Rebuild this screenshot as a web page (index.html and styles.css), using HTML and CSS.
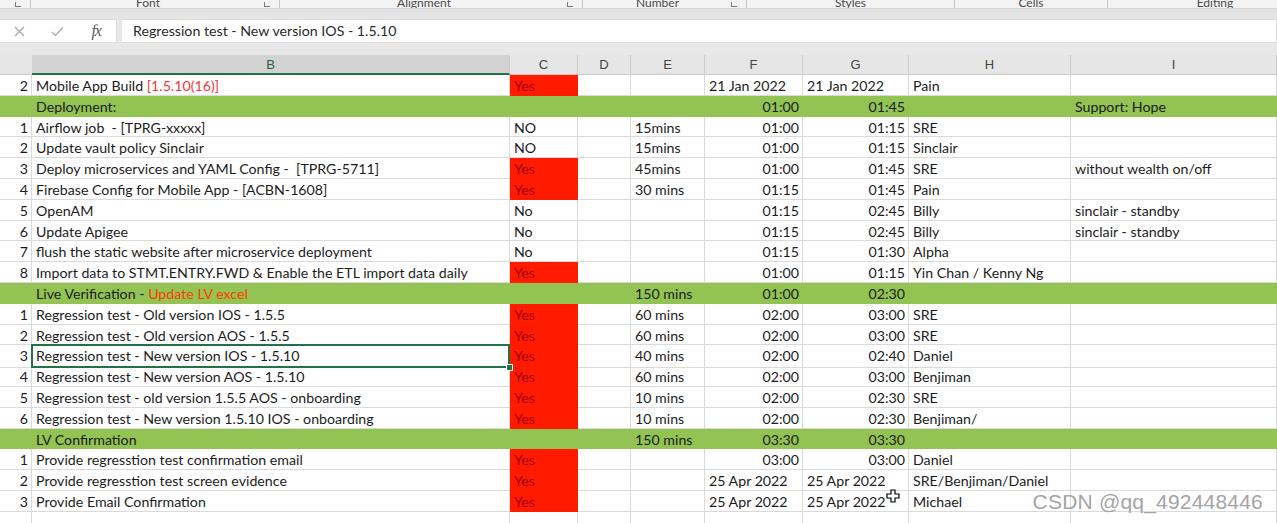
FILE: index.html
```html
<!DOCTYPE html>
<html>
<head>
    <title>Release Runbook - Sheet</title>
    <link rel="stylesheet" href="styles.css">
</head>
<body>
<div class="app">
    <div class="ribbon">
        <div class="grp g-clip"><span class="launch"></span></div>
        <div class="grp g-font"><span class="lbl">Font</span><span class="launch"></span></div>
        <div class="grp g-align"><span class="lbl">Alignment</span><span class="launch"></span></div>
        <div class="grp g-num"><span class="lbl">Number</span><span class="launch"></span></div>
        <div class="grp g-styles"><span class="lbl">Styles</span></div>
        <div class="grp g-cells"><span class="lbl">Cells</span></div>
        <div class="grp g-edit"><span class="lbl">Editing</span></div>
    </div>

    <div class="fbar">
        <div class="fx-box">
            <span class="ico ico-x">
                <svg width="11" height="11" viewBox="0 0 11 11"><path d="M1 1 L10 10 M10 1 L1 10" stroke="#a8a8a8" stroke-width="1.2" fill="none"/></svg>
            </span>
            <span class="ico ico-ok">
                <svg width="13" height="11" viewBox="0 0 13 11"><path d="M1 6 L4.5 9.5 L12 1.5" stroke="#a8a8a8" stroke-width="1.2" fill="none"/></svg>
            </span>
            <span class="ico ico-fx">fx</span>
        </div>
        <div class="formula">Regression test - New version IOS - 1.5.10</div>
    </div>

    <div class="sheet">
        <div class="row head">
            <div class="c"></div><div class="c sel">B</div><div class="c">C</div><div class="c">D</div><div class="c">E</div><div class="c">F</div><div class="c">G</div><div class="c">H</div><div class="c">I</div>
        </div>

        <div class="row">
            <div class="c n">2</div><div class="c">Mobile App Build <span class="t-red">[1.5.10(16)]</span></div><div class="c yes">Yes</div><div class="c"></div><div class="c"></div><div class="c">21 Jan 2022</div><div class="c">21 Jan 2022</div><div class="c">Pain</div><div class="c"></div>
        </div>
        <div class="row green">
            <div class="c n"></div><div class="c">Deployment:</div><div class="c"></div><div class="c"></div><div class="c"></div><div class="c r">01:00</div><div class="c r">01:45</div><div class="c"></div><div class="c">Support: Hope</div>
        </div>
        <div class="row">
            <div class="c n">1</div><div class="c">Airflow job&nbsp; - [TPRG-xxxxx]</div><div class="c">NO</div><div class="c"></div><div class="c">15mins</div><div class="c r">01:00</div><div class="c r">01:15</div><div class="c">SRE</div><div class="c"></div>
        </div>
        <div class="row">
            <div class="c n">2</div><div class="c">Update vault policy Sinclair</div><div class="c">NO</div><div class="c"></div><div class="c">15mins</div><div class="c r">01:00</div><div class="c r">01:15</div><div class="c">Sinclair</div><div class="c"></div>
        </div>
        <div class="row">
            <div class="c n">3</div><div class="c">Deploy microservices and YAML Config -&nbsp; [TPRG-5711]</div><div class="c yes">Yes</div><div class="c"></div><div class="c">45mins</div><div class="c r">01:00</div><div class="c r">01:45</div><div class="c">SRE</div><div class="c">without wealth on/off</div>
        </div>
        <div class="row">
            <div class="c n">4</div><div class="c">Firebase Config for Mobile App - [ACBN-1608]</div><div class="c yes">Yes</div><div class="c"></div><div class="c">30 mins</div><div class="c r">01:15</div><div class="c r">01:45</div><div class="c">Pain</div><div class="c"></div>
        </div>
        <div class="row">
            <div class="c n">5</div><div class="c">OpenAM</div><div class="c">No</div><div class="c"></div><div class="c"></div><div class="c r">01:15</div><div class="c r">02:45</div><div class="c">Billy</div><div class="c">sinclair - standby</div>
        </div>
        <div class="row">
            <div class="c n">6</div><div class="c">Update Apigee</div><div class="c">No</div><div class="c"></div><div class="c"></div><div class="c r">01:15</div><div class="c r">02:45</div><div class="c">Billy</div><div class="c">sinclair - standby</div>
        </div>
        <div class="row">
            <div class="c n">7</div><div class="c">flush the static website after microservice deployment</div><div class="c">No</div><div class="c"></div><div class="c"></div><div class="c r">01:15</div><div class="c r">01:30</div><div class="c">Alpha</div><div class="c"></div>
        </div>
        <div class="row">
            <div class="c n">8</div><div class="c">Import data to STMT.ENTRY.FWD &amp; Enable the ETL import data daily</div><div class="c yes">Yes</div><div class="c"></div><div class="c"></div><div class="c r">01:00</div><div class="c r">01:15</div><div class="c">Yin Chan / Kenny Ng</div><div class="c"></div>
        </div>
        <div class="row green">
            <div class="c n"></div><div class="c">Live Verification - <span class="t-orange">Update LV excel</span></div><div class="c"></div><div class="c"></div><div class="c">150 mins</div><div class="c r">01:00</div><div class="c r">02:30</div><div class="c"></div><div class="c"></div>
        </div>
        <div class="row">
            <div class="c n">1</div><div class="c">Regression test - Old version IOS - 1.5.5</div><div class="c yes">Yes</div><div class="c"></div><div class="c">60 mins</div><div class="c r">02:00</div><div class="c r">03:00</div><div class="c">SRE</div><div class="c"></div>
        </div>
        <div class="row">
            <div class="c n">2</div><div class="c">Regression test - Old version AOS - 1.5.5</div><div class="c yes">Yes</div><div class="c"></div><div class="c">60 mins</div><div class="c r">02:00</div><div class="c r">03:00</div><div class="c">SRE</div><div class="c"></div>
        </div>
        <div class="row">
            <div class="c n">3</div><div class="c cur">Regression test - New version IOS - 1.5.10</div><div class="c yes">Yes</div><div class="c"></div><div class="c">40 mins</div><div class="c r">02:00</div><div class="c r">02:40</div><div class="c">Daniel</div><div class="c"></div>
        </div>
        <div class="row">
            <div class="c n">4</div><div class="c">Regression test - New version AOS - 1.5.10</div><div class="c yes">Yes</div><div class="c"></div><div class="c">60 mins</div><div class="c r">02:00</div><div class="c r">03:00</div><div class="c">Benjiman</div><div class="c"></div>
        </div>
        <div class="row">
            <div class="c n">5</div><div class="c">Regression test - old version 1.5.5 AOS - onboarding</div><div class="c yes">Yes</div><div class="c"></div><div class="c">10 mins</div><div class="c r">02:00</div><div class="c r">02:30</div><div class="c">SRE</div><div class="c"></div>
        </div>
        <div class="row">
            <div class="c n">6</div><div class="c">Regression test - New version 1.5.10 IOS - onboarding</div><div class="c yes">Yes</div><div class="c"></div><div class="c">10 mins</div><div class="c r">02:00</div><div class="c r">02:30</div><div class="c">Benjiman/</div><div class="c"></div>
        </div>
        <div class="row green">
            <div class="c n"></div><div class="c">LV Confirmation</div><div class="c"></div><div class="c"></div><div class="c">150 mins</div><div class="c r">03:30</div><div class="c r">03:30</div><div class="c"></div><div class="c"></div>
        </div>
        <div class="row">
            <div class="c n">1</div><div class="c">Provide regresstion test confirmation email</div><div class="c yes">Yes</div><div class="c"></div><div class="c"></div><div class="c r">03:00</div><div class="c r">03:00</div><div class="c">Daniel</div><div class="c"></div>
        </div>
        <div class="row">
            <div class="c n">2</div><div class="c">Provide regresstion test screen evidence</div><div class="c yes">Yes</div><div class="c"></div><div class="c"></div><div class="c">25 Apr 2022</div><div class="c">25 Apr 2022</div><div class="c">SRE/Benjiman/Daniel</div><div class="c"></div>
        </div>
        <div class="row">
            <div class="c n">3</div><div class="c">Provide Email Confirmation</div><div class="c yes">Yes</div><div class="c"></div><div class="c"></div><div class="c">25 Apr 2022</div><div class="c">25 Apr 2022</div><div class="c">Michael</div><div class="c"></div>
        </div>
        <div class="row">
            <div class="c n"></div><div class="c"></div><div class="c"></div><div class="c"></div><div class="c"></div><div class="c"></div><div class="c"></div><div class="c"></div><div class="c"></div>
        </div>
    </div>

    <!-- mouse cursor and image watermark sit over the grid -->
    <svg class="cursor" width="14" height="14" viewBox="0 0 14 14"><polygon points="5,1 9,1 9,5 13,5 13,9 9,9 9,13 5,13 5,9 1,9 1,5 5,5" fill="#fff" stroke="#000" stroke-width="1.2"/></svg>
    <div class="watermark">CSDN @qq_492448446</div>
</div>
</body>
</html>
```

FILE: styles.css
```css
body { margin: 0; background: #fff; font-family: Lato, "Liberation Sans", sans-serif; overflow: hidden; }
.app { position: relative; width: 1277px; height: 523px; overflow: hidden; }

/* ribbon group labels, cut off at the top */
.ribbon {
    display: flex;
    height: 8px;
    overflow: hidden;
    background: #f3f3f3;
    border-bottom: 1px solid #d6d6d6;
}
.grp {
    position: relative;
    display: flex;
    align-items: flex-end;
    justify-content: center;
    border-right: 1px solid #c8c8c8;
    box-sizing: border-box;
    flex: none;
}
.g-clip { width: 31px; }
.g-font { width: 249px; }
.g-align { width: 303px; }
.g-num { width: 164px; }
.g-styles { width: 208px; }
.g-cells { width: 153px; }
.g-edit { width: 214px; border-right: none; }
.lbl { font-size: 12px; line-height: 12px; color: #4a4a4a; margin-bottom: -1px; }
.g-font .lbl, .g-align .lbl, .g-num .lbl { margin-right: 14px; }
.launch {
    position: absolute;
    right: 9px;
    bottom: 1px;
    width: 5px;
    height: 4px;
    border-left: 1px solid #777;
    border-bottom: 1px solid #777;
}

/* formula bar */
.fbar {
    display: flex;
    gap: 5px;
    height: 46px;
    padding: 10px 0 0;
    box-sizing: border-box;
    background: linear-gradient(#e2e2e2, #e9e9e9 40%, #e8e8e8);
}
.fx-box, .formula {
    height: 24px;
    background: #fff;
    border: 1px solid #dcdcdc;
    border-left: none;
    box-sizing: border-box;
}
.fx-box { width: 117px; display: flex; align-items: center; }
.ico { display: flex; justify-content: center; align-items: center; height: 22px; }
.ico-x { width: 39px; }
.ico-ok { width: 38px; }
.ico-fx { width: 40px; font-family: "Liberation Serif", serif; font-style: italic; font-size: 16px; color: #5a5a5a; letter-spacing: -1px; }
.formula { flex: 1; padding-left: 11px; font-size: 14.2px; line-height: 22px; color: #2a2a2a; }

/* grid */
.sheet { background: #fff; }
.row {
    display: grid;
    grid-template-columns: 32px 478px 68px 53px 74px 98px 106px 162px 206px;
    height: 20.8px;
}
.c {
    box-sizing: border-box;
    border-right: 1px solid #dadada;
    border-bottom: 1px solid #dadada;
    padding: 0 3px 0 4px;
    font-size: 14.2px;
    line-height: 22px;
    color: #1c1c1c;
    white-space: nowrap;
    overflow: hidden;
}
.c.n { text-align: right; padding-right: 3px; }
.c.r { text-align: right; }

.head { height: 20px; background: #e6e6e6; }
.head .c {
    text-align: center;
    font-family: "Liberation Sans", sans-serif;
    font-size: 13px;
    line-height: 19px;
    color: #444;
    border-right-color: #cdcdcd;
    border-bottom-color: #cacaca;
    padding: 0;
}
.head .c:first-child { border-right-color: #e6e6e6; }
.head .sel { background: #d2d2d2; color: #2b5d43; border-bottom: 2px solid #217346; }

.green .c { background: #92c353; border-color: #92c353; }
.yes { background: #ff1a00; border-color: #ff1a00 !important; color: #a30000; }
.t-red { color: #f23a3a; }
.t-orange { color: #ff3b00; }

/* active cell */
.cur { position: relative; overflow: visible; }
.cur::after {
    content: "";
    position: absolute;
    left: -1px;
    top: -1px;
    right: -1px;
    bottom: -1px;
    border: 2px solid #217346;
}
.cur::before {
    content: "";
    position: absolute;
    right: -4px;
    bottom: -4px;
    width: 5px;
    height: 5px;
    background: #217346;
    border: 1px solid #fff;
    z-index: 1;
}

.cursor { position: absolute; left: 886px; top: 489px; }
.watermark {
    position: absolute;
    right: 14px;
    top: 490px;
    font-family: "Liberation Sans", sans-serif;
    font-size: 21px;
    color: #a4a4a4;
    letter-spacing: 0.2px;
}
```
